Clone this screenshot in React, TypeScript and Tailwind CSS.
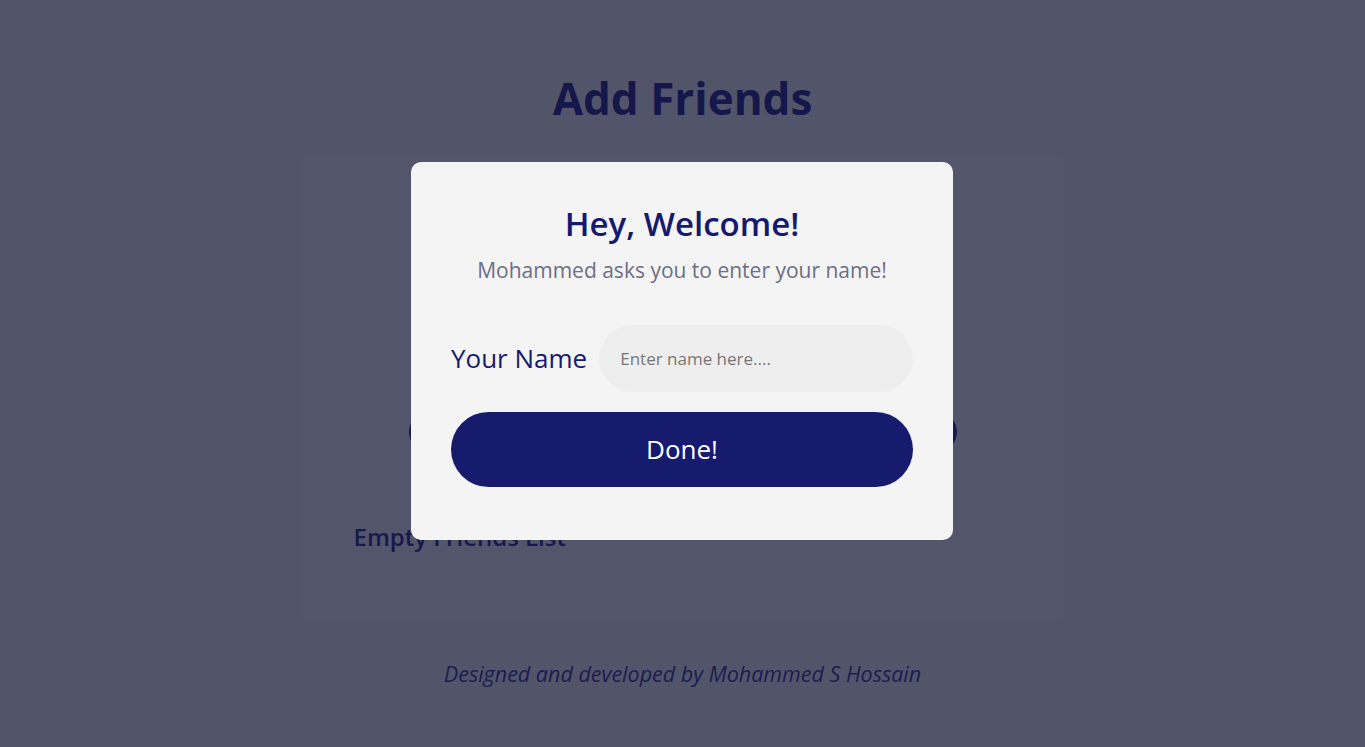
export default function App() {
  return (
    <div className="min-h-screen w-full bg-[#52546a] font-['Open_Sans',sans-serif] relative">
      <main className="flex flex-col items-center pt-[66px]">
        <h1 className="text-[44px] leading-[64px] font-bold text-[#15164a]">Add Friends</h1>

        <section className="mt-[26px] w-[764px] h-[464px] bg-[#53556b] rounded-md flex flex-col items-center px-[53px] pt-[256px]">
          <div className="w-[548px] h-[40px] rounded-full bg-[#161a4f]" />
          <h2 className="self-start mt-[68px] text-[24px] leading-[33px] font-semibold text-[#17184c]">Empty Friends List</h2>
        </section>

        <footer className="mt-[40px] text-[21.5px] leading-[28px] italic text-[#1c1c4f]">
          Designed and developed by Mohammed S Hossain
        </footer>
      </main>

      <div className="absolute top-[162px] left-[411px] w-[542px] h-[378px] bg-[#f4f4f4] rounded-[10px] px-[40px] pt-[40px] flex flex-col">
        <h3 className="text-center text-[33px] leading-[44px] font-semibold text-[#161a6e]">Hey, Welcome!</h3>
        <p className="text-center mt-[9px] text-[21px] leading-[30px] text-[#6e6e82]">Mohammed asks you to enter your name!</p>

        <div className="mt-[40px] flex items-center gap-[12px]">
          <label className="text-[26px] text-[#161a6e] whitespace-nowrap">Your Name</label>
          <input
            placeholder="Enter name here...."
            className="flex-1 min-w-0 h-[67px] rounded-full bg-[#eeeeee] px-[21px] text-[17px] text-[#333] placeholder:text-[#777] outline-none"
          />
        </div>

        <button className="mt-[20px] h-[75px] w-full rounded-full bg-[#161b6e] text-white text-[26px]">
          Done!
        </button>
      </div>
    </div>
  );
}
